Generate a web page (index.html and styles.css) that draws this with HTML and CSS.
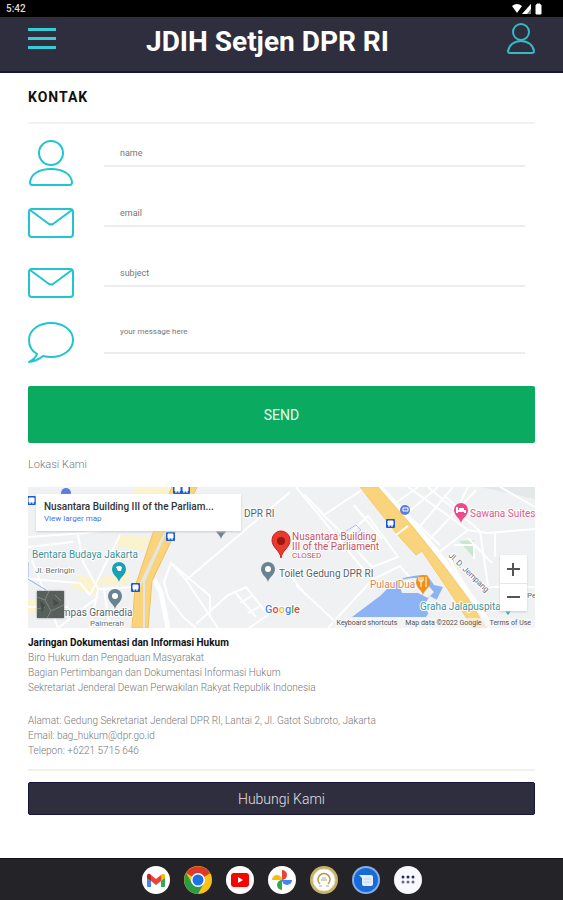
FILE: index.html
```html
<!DOCTYPE html>
<html lang="id">
<head>
  <meta charset="UTF-8">
  <meta name="viewport" content="width=device-width, initial-scale=1.0">
  <title>JDIH Setjen DPR RI</title>
  <link rel="stylesheet" href="styles.css">
</head>
<body>

  <!-- Status bar -->
  <div class="status-bar">
    <span>5:42</span>
    <svg width="32" height="12" viewBox="0 0 32 12" fill="#fff">
      <path d="M0 3Q5 -1 10 3L5 10Z"/>
      <path d="M19 1V11H10Z" fill="#777"/>
      <path d="M19 1V6L15 11H10Z"/>
      <path d="M24 2h1V1h3v1h1v9h-5Z" stroke="#fff" stroke-linejoin="round"/>
    </svg>
  </div>

  <!-- Header -->
  <header class="header">
    <button class="icon-btn" type="button" aria-label="Menu">
      <svg width="28" height="28" viewBox="0 0 28 28" fill="none" stroke="#35cdd6" stroke-width="3">
        <path d="M0 5.5H28M0 14.5H28M0 23.5H28"/>
      </svg>
    </button>
    <h1>JDIH Setjen DPR RI</h1>
    <button class="icon-btn" type="button" aria-label="Akun">
      <svg width="28" height="32" viewBox="0 0 28 32" fill="none" stroke="#35b9c4" stroke-width="2">
        <circle cx="14" cy="8" r="8"/>
        <path d="M3 29Q1 29 1 27C2 21 7 17 14 17S26 21 27 27Q27 29 25 29Z"/>
      </svg>
    </button>
  </header>

  <main class="container">
    <h2>Kontak</h2>

    <!-- Contact form -->
    <form class="contact-form">
      <div class="form-row">
        <label for="name">
          <svg class="field-icon" viewBox="0 0 46 46" role="img" aria-label="Name">
            <circle cx="23" cy="13" r="12"/>
            <path d="M4 45Q2 45 2 42C3 34 11 29 23 29S43 34 44 42Q44 45 42 45Z"/>
          </svg>
        </label>
        <input type="text" id="name" placeholder="name">
      </div>
      <div class="form-row">
        <label for="email">
          <svg class="field-icon" viewBox="0 0 46 46" role="img" aria-label="Email">
            <rect x="1" y="9" width="44" height="28" rx="3"/>
            <path d="M2 10L21 24Q23 25 25 24L44 10"/>
          </svg>
        </label>
        <input type="email" id="email" placeholder="email">
      </div>
      <div class="form-row">
        <label for="subject">
          <svg class="field-icon" viewBox="0 0 46 46" role="img" aria-label="Subject">
            <rect x="1" y="9" width="44" height="28" rx="3"/>
            <path d="M2 10L21 24Q23 25 25 24L44 10"/>
          </svg>
        </label>
        <input type="text" id="subject" placeholder="subject">
      </div>
      <div class="form-row">
        <label for="message">
          <svg class="field-icon" viewBox="0 0 46 46" role="img" aria-label="Message">
            <path d="M9 34C4 31 1 26 1 20C1 10 11 3 23 3S45 10 45 20S35 37 23 37Q19 37 15 36Q9 41 1 42Q8 38 9 34Z"/>
          </svg>
        </label>
        <textarea id="message" placeholder="your message here"></textarea>
      </div>
      <button class="send-btn" type="button">SEND</button>
    </form>

    <p class="map-title">Lokasi Kami</p>

    <!-- Map -->
    <div class="map">
      <svg class="map-canvas" viewBox="0 0 507 141" preserveAspectRatio="xMidYMid slice">
        <defs>
          <path id="pin" d="M0 10C-1 5 -7 3 -7 -3A7 7 0 0 1 7 -3C7 3 1 5 0 10Z"/>
          <g id="station">
            <rect x="-4" y="-4" width="9" height="9" rx="1" fill="#1a5bd0"/>
            <path d="M-2 -2H3V2H-2ZM-1 4V2M2 4V2" fill="#fff" stroke="#fff"/>
          </g>
        </defs>
        <rect width="507" height="141" fill="#eff1f2"/>

        <!-- blocks -->
        <g fill="#fbf2ce">
          <path d="M90 48L122 50L116 64L88 59ZM52 88L76 94L66 108L42 100ZM73 91L102 84L100 97L78 98ZM0 112L28 116L22 124L0 126ZM108 0H142L138 8H104Z"/>
        </g>
        <path d="M431 54L446 53V71Z" fill="#cbe6d3"/>
        <path d="M452 0H507V12L480 6Z" fill="#e5e8e9"/>

        <!-- streets -->
        <g class="streets">
          <path d="M0 50L58 46L108 38M0 60L45 55M50 48L55 75L70 102L62 141M70 102L108 100M62 108L92 48M0 92L52 96L62 108M70 110L30 141M0 120H40M76 102L82 141M4 73L30 141"/>
          <path d="M262 5L158 93L143 76L136 95L140 110L155 130L168 141M143 76L182 109V128M158 93L190 141M168 137L200 108L218 100L240 128L221 141M206 104L228 130M212 116L225 108M220 126L234 118"/>
          <path d="M268 0L344 93L300 141M276 7L296 28L338 0M290 23L318 50L340 29L370 70L344 80L314 47M326 18L354 52M344 93L372 79L385 94M268 98L314 141M262 88L278 108"/>
          <path d="M365 18L390 0M377 28L410 0M389 43L425 0M400 54L448 3M410 66L440 43L460 46L507 42M380 0L440 43M400 0L452 44M356 6L412 58M416 8L430 21M452 44L460 99M467 46V70M440 51L464 76M426 58H446V72M472 0L507 20M462 100H507M420 70L448 116M440 0L430 20"/>
        </g>
        <path d="M126 92L133 106L140 141" class="street-wide"/>
        <path d="M352 0L390 42L418 76L445 112L464 141" class="street-wide"/>
        <path d="M296 58L328 38L333 43L307 63" fill="none" stroke="#a9c6f5"/>
        <path d="M0 92L18 103M0 75V90" stroke="#8faee8" fill="none"/>

        <!-- toll roads -->
        <path d="M144 0H169L145 50L124 94L120 141H104L107 100L125 46Z" fill="#fad47c" stroke="#f3c05c"/>
        <path d="M140 40L116 94V141M136 48L111 100" stroke="#e3e5e6" stroke-width="2" fill="none"/>
        <path d="M332 0H350L385 40L419 83L439 110L458 141H445L425 110L394 64L388 68L368 46Z" fill="#fad47c" stroke="#f8ca68"/>
        <path d="M368 48L380 39" stroke="#fff" stroke-width="2"/>

        <!-- lake -->
        <path d="M324 130L352 109L365 96Q377 88 399 88L406 98L415 100L406 118L398 130Z" fill="#8db3f4"/>
        <path d="M370 94Q385 89 394 92L406 105L400 111L390 106H374Z" fill="#eff1f2"/>
        <path d="M402 109L418 118L402 130L396 118Z" fill="#eff1f2"/>

        <!-- stations -->
        <use href="#station" x="142" y="49"/>
        <use href="#station" x="107" y="100"/>
        <use href="#station" x="362" y="36"/>
        <use href="#station" x="3" y="13"/>
        <use href="#station" x="149" y="2"/>
        <use href="#station" x="157" y="2"/>
        <circle cx="38" cy="6" r="5" fill="#5b7de0"/>
        <circle cx="377" cy="23" r="5" fill="#5b7de0"/>
        <path d="M375 21H380V24H375Z" fill="#5b7de0" stroke="#fff"/>

        <!-- labels -->
        <g class="map-labels">
          <text x="216" y="30">DPR RI</text>
          <text x="4" y="71" class="teal">Bentara Budaya Jakarta</text>
          <text x="7" y="86" class="street-name">Jl. Beringin</text>
          <text x="22" y="129">Kompas Gramedia</text>
          <text x="62" y="139" class="street-name">Palmerah</text>
          <text x="251" y="90">Toilet Gedung DPR RI</text>
          <text x="264" y="53" class="red">Nusantara Building</text>
          <text x="264" y="63" class="red">III of the Parliament</text>
          <text x="264" y="71" class="red closed">CLOSED</text>
          <text x="442" y="30" class="pink">Sawana Suites</text>
          <text x="342" y="101" class="orange">Pulau Dua</text>
          <text x="392" y="123" class="teal">Graha Jalapuspita</text>
          <text x="420" y="69" class="street-name" transform="rotate(44 420 69)">Jl. D. Jempang</text>
          <text x="499" y="111" class="closed">Pe</text>
        </g>
        <text x="237" y="126" class="google"><tspan fill="#4285f4">G</tspan><tspan fill="#ea4335">o</tspan><tspan fill="#fbbc05">o</tspan><tspan fill="#4285f4">g</tspan><tspan fill="#34a853">l</tspan><tspan fill="#ea4335">e</tspan></text>

        <!-- pins -->
        <g fill="#6b8390">
          <use href="#pin" x="193" y="42"/>
          <use href="#pin" x="240" y="85"/>
          <use href="#pin" x="87" y="112"/>
        </g>
        <g fill="#fff">
          <circle cx="240" cy="82" r="3"/>
          <circle cx="87" cy="109" r="3"/>
        </g>
        <use href="#pin" x="91" y="85" fill="#16a2b4"/>
        <path d="M88 80Q91 78 94 80L93 84H90Z" fill="#fff"/>
        <use href="#pin" x="433" y="26" fill="#ea4c89"/>
        <path d="M429 20V26M429 24H437V26M431 22H436" stroke="#fff" stroke-width="2" fill="none"/>
        <use href="#pin" x="395" y="98" fill="#ef9114"/>
        <path d="M393 90V100M391 90V94H395V90M398 100V90" stroke="#fff" fill="none"/>
        <path d="M475 121H485L480 128Z" fill="#16a2b4"/>
        <path d="M253 71C252 63 244 61 244 53A9 9 0 0 1 262 53C262 61 254 63 253 71Z" fill="#ea3a2d" stroke="#c5221f"/>
        <circle cx="253" cy="54" r="4" fill="#9c1710"/>
      </svg>

      <div class="place-card">
        <strong>Nusantara Building III of the Parliam...</strong>
        <a href="#">View larger map</a>
      </div>
      <button class="satellite-btn" type="button" aria-label="Satellite">
        <svg width="27" height="27" viewBox="0 0 27 27" fill="none">
          <rect width="27" height="27" fill="#58605c"/>
          <path d="M0 6L8 9L12 0M8 9L14 20L27 14M14 20L10 27M0 18L8 16M18 4L24 10" stroke="#7c8780"/>
          <path d="M3 10L8 14L5 22ZM16 8L22 12L17 15Z" fill="#434e49"/>
        </svg>
      </button>
      <div class="zoom-control">
        <button type="button" aria-label="Zoom in">
          <svg width="13" height="13" viewBox="0 0 13 13" stroke="#555" stroke-width="2"><path d="M0 6H13M6 0V13"/></svg>
        </button>
        <button type="button" aria-label="Zoom out">
          <svg width="13" height="13" viewBox="0 0 13 13" stroke="#555" stroke-width="2"><path d="M0 6H13"/></svg>
        </button>
      </div>
      <div class="map-footer">
        <a href="#">Keyboard shortcuts</a>
        <span>Map data ©2022 Google</span>
        <a href="#">Terms of Use</a>
      </div>
    </div>

    <!-- Address -->
    <div class="address">
      <p>
        <strong>Jaringan Dokumentasi dan Informasi Hukum</strong><br>
        Biro Hukum dan Pengaduan Masyarakat<br>
        Bagian Pertimbangan dan Dokumentasi Informasi Hukum<br>
        Sekretariat Jenderal Dewan Perwakilan Rakyat Republik Indonesia
      </p>
      <p>
        Alamat: Gedung Sekretariat Jenderal DPR RI, Lantai 2, Jl. Gatot Subroto, Jakarta<br>
        Email: bag_hukum@dpr.go.id<br>
        Telepon: +6221 5715 646
      </p>
    </div>

    <button class="contact-btn" type="button">Hubungi Kami</button>
  </main>

  <!-- Dock -->
  <nav class="dock">
    <button type="button" aria-label="Gmail">
      <svg viewBox="0 0 28 28">
        <circle cx="14" cy="14" r="14" fill="#fff"/>
        <path d="M5 10L9 12V21H6Q5 21 5 20Z" fill="#4285f4"/>
        <path d="M23 10L19 12V21H22Q23 21 23 20Z" fill="#34a853"/>
        <path d="M19 9L20 8Q23 7 23 10V12L19 15Z" fill="#fbbc04"/>
        <path d="M5 12V10Q5 7 8 8L9 9V15Z" fill="#c5221f"/>
        <path d="M9 9L14 13L19 9V15L14 19L9 15Z" fill="#ea4335"/>
      </svg>
    </button>
    <button type="button" aria-label="Chrome">
      <svg viewBox="0 0 28 28">
        <circle cx="14" cy="14" r="14" fill="#fbc116"/>
        <path d="M14 14L2 7A14 14 0 0 1 26 7Z" fill="#de3a2c"/>
        <path d="M2 7A14 14 0 0 0 14 28L20 17L14 14L8 17Z" fill="#2a9b49"/>
        <path d="M14 7H26L20 11Z" fill="#de3a2c"/>
        <circle cx="14" cy="14" r="7" fill="#fff"/>
        <circle cx="14" cy="14" r="5.5" fill="#1a73e8"/>
      </svg>
    </button>
    <button type="button" aria-label="YouTube">
      <svg viewBox="0 0 28 28">
        <circle cx="14" cy="14" r="14" fill="#fff"/>
        <rect x="5" y="7" width="18" height="14" rx="3" fill="#fe0000"/>
        <path d="M12 11L17 14L12 17Z" fill="#fff"/>
      </svg>
    </button>
    <button type="button" aria-label="Photos">
      <svg viewBox="0 0 28 28">
        <circle cx="14" cy="14" r="14" fill="#fff"/>
        <path d="M14 4A5 5 0 0 1 14 14Z" fill="#ea4335"/>
        <path d="M24 14A5 5 0 0 1 14 14Z" fill="#4285f4"/>
        <path d="M14 24A5 5 0 0 1 14 14Z" fill="#34a853"/>
        <path d="M4 14A5 5 0 0 1 14 14Z" fill="#fbbc04"/>
      </svg>
    </button>
    <button type="button" aria-label="JDIH">
      <svg viewBox="0 0 28 28">
        <circle cx="14" cy="14" r="14" fill="#c7b26b"/>
        <circle cx="14" cy="14" r="11" fill="#fff" stroke="#e8dfb8"/>
        <path d="M10 18A6 6 0 1 1 18 18" fill="none" stroke="#b59a4c" stroke-width="1.5"/>
        <path d="M11 14H17M9 20H12M16 20H19" stroke="#b9a564"/>
        <path d="M12 12H16" stroke="#8cc4a4"/>
      </svg>
    </button>
    <button type="button" aria-label="Messages">
      <svg viewBox="0 0 28 28">
        <circle cx="14" cy="14" r="14" fill="#86aee6"/>
        <circle cx="14" cy="14" r="12" fill="#176bd8"/>
        <path d="M7 9H19Q21 9 21 11V18Q21 20 19 20H12Q10 20 10 18V12Z" fill="#e4edfb"/>
        <path d="M12 13H19M12 16H19" stroke="#bcd2f3"/>
      </svg>
    </button>
    <button type="button" aria-label="Apps">
      <svg viewBox="0 0 28 28">
        <circle cx="14" cy="14" r="14" fill="#f8f8ff"/>
        <g fill="#2b2468">
          <circle cx="9" cy="11" r="1.5"/><circle cx="14" cy="11" r="1.5"/><circle cx="19" cy="11" r="1.5"/>
        </g>
        <g fill="#6c6684">
          <circle cx="9" cy="16" r="1.5"/><circle cx="14" cy="16" r="1.5"/><circle cx="19" cy="16" r="1.5"/>
        </g>
      </svg>
    </button>
  </nav>

</body>
</html>
```

FILE: styles.css
```css
* { box-sizing: border-box; }
body { font-family: Roboto, "Liberation Sans", sans-serif; background: #fff; margin: 0; min-height: 100vh; display: flex; flex-direction: column; color: #777; }
button { font-family: inherit; border: none; padding: 0; cursor: pointer; }
svg { display: block; }
h1, h2, p { margin: 0; }

/* top bars */
.status-bar { display: flex; justify-content: space-between; align-items: center; height: 17px; padding: 0 19px 0 6px; background: #000; color: #ddd; font-size: 10px; font-weight: 500; }
.header { display: flex; justify-content: space-between; align-items: flex-start; height: 56px; padding: 7px 28px 0; background: #2f2e3e; border-bottom: 2px solid #17153a; }
.header h1 { flex: 1; padding-right: 28px; text-align: center; color: #fff; font-size: 28px; line-height: 36px; font-weight: 700; }
.icon-btn { background: none; }
.icon-btn svg { overflow: visible; }

.container { flex: 1; padding: 0 28px; }
h2 { padding: 16px 0; border-bottom: 2px solid #f2f2f2; color: #111; font-size: 14px; line-height: 17px; font-weight: 700; letter-spacing: 1px; text-transform: uppercase; }

/* contact form */
.contact-form { padding-top: 9px; }
.form-row { display: flex; align-items: flex-start; gap: 30px; height: 60px; padding: 7px 10px 0 0; }
.field-icon { width: 46px; height: 46px; fill: none; stroke: #20c5cf; stroke-width: 2; stroke-linejoin: round; }
.form-row input, .form-row textarea { flex: 1; min-width: 0; height: 27px; padding: 0 16px; border: none; border-bottom: 2px solid #ededed; border-radius: 0; background: none; font-family: inherit; font-size: 9px; line-height: 24px; resize: none; }
.form-row textarea { height: 34px; font-size: 8px; }
.form-row input::placeholder, .form-row textarea::placeholder { color: #777; }
.send-btn { width: 100%; height: 57px; margin-top: 13px; background: #0aaa60; border-radius: 2px; color: #e8fbee; font-size: 14px; }

/* map */
.map-title { padding: 14px 0; font-size: 11px; line-height: 16px; font-weight: 300; }
.map { position: relative; height: 141px; overflow: hidden; }
.map-canvas { width: 100%; height: 100%; }
.streets { fill: none; stroke: #fff; stroke-width: 2; }
.street-wide { fill: none; stroke: #fff; stroke-width: 5; }
.map-labels { font-size: 10px; fill: #58646c; stroke: #fff; stroke-width: 2px; paint-order: stroke; }
.map-labels .teal { fill: #3e9299; }
.map-labels .red { fill: #c9515a; }
.map-labels .pink { fill: #e0588c; }
.map-labels .orange { fill: #dd8551; }
.map-labels .street-name { font-size: 8px; fill: #686f74; }
.map-labels .closed { font-size: 8px; }
.google { font-size: 11px; font-weight: 500; stroke: #fff; stroke-width: 2px; paint-order: stroke; }
.place-card { position: absolute; left: 8px; top: 7px; width: 205px; padding: 7px 8px 6px; background: #fff; box-shadow: 0 1px 2px #ccc; font-size: 10px; line-height: 12px; }
.place-card strong { display: block; color: #333; font-weight: 500; }
.place-card a { color: #4a6ff0; font-size: 8px; text-decoration: none; display: block; }
.satellite-btn { position: absolute; left: 9px; bottom: 10px; box-shadow: 0 0 2px #888; }
.zoom-control { position: absolute; right: 8px; bottom: 17px; width: 27px; background: #fff; box-shadow: 0 1px 2px #ccc; }
.zoom-control button { display: flex; align-items: center; justify-content: center; width: 27px; height: 28px; background: none; }
.zoom-control button + button { border-top: 1px solid #e6e6e6; }
.map-footer { position: absolute; right: 0; bottom: 0; display: flex; gap: 8px; padding: 0 4px; background: rgba(245, 245, 245, 0.7); color: #555; font-size: 7px; line-height: 10px; }
.map-footer a { color: inherit; text-decoration: none; }

/* address */
.address { padding: 7px 0 11px; border-bottom: 2px solid #f0f0f0; font-size: 10px; line-height: 15px; font-weight: 300; }
.address p + p { margin-top: 18px; }
.address strong { color: #111; font-weight: 700; }
.contact-btn { width: 100%; height: 33px; margin: 11px 0 16px; background: #2f2e3e; border: 1px solid #17153a; border-radius: 2px; color: #e0e0e4; font-size: 14px; font-weight: 300; }

/* dock */
.dock { display: flex; justify-content: center; align-items: center; gap: 14px; height: 42px; background: #242428; border-top: 1px solid #111; }
.dock button { width: 28px; height: 28px; background: none; }
```
